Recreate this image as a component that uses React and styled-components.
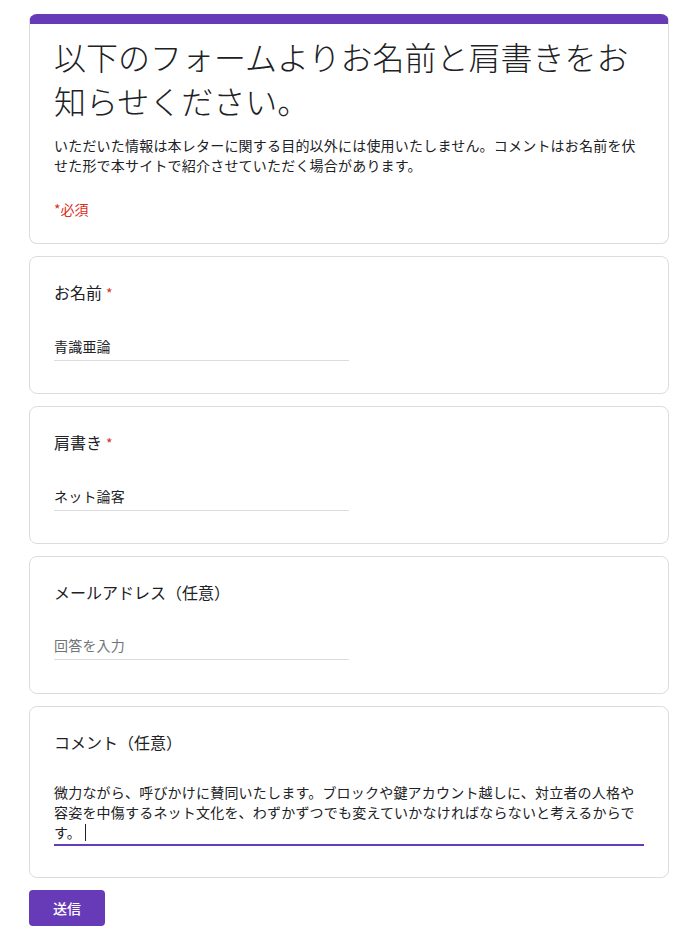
import React from "react";
import styled, { createGlobalStyle } from "styled-components";

const Global = createGlobalStyle`
  html, body { margin: 0; padding: 0; background: #fff; }
  body {
    font-family: "Noto Sans CJK JP", "Noto Sans", Roboto, Arial, sans-serif;
    color: #202124;
  }
  * { box-sizing: border-box; }
`;

const Page = styled.div`
  padding: 14px 13px 14px 29px;
  width: 682px;
  display: flex;
  flex-direction: column;
  gap: 12px;
`;

const Card = styled.div`
  background: #fff;
  border: 1px solid #dadce0;
  border-radius: 8px;
  padding: 24px 24px 24px;
  display: flex;
  flex-direction: column;
  min-height: ${(p) => p.$minHeight || 0}px;
`;

const HeaderCard = styled(Card)`
  border-top: 10px solid #673ab7;
  padding-top: 10px;
`;

const Title = styled.h1`
  margin: 0;
  font-size: 32px;
  line-height: 44px;
  font-weight: 300;
  color: #202124;
  letter-spacing: 0;
`;

const Description = styled.p`
  margin: 13px 0 0;
  font-size: 14px;
  line-height: 20px;
  letter-spacing: 0.2px;
  color: #202124;
`;

const Required = styled.div`
  margin-top: 24px;
  font-size: 14px;
  line-height: 20px;
  color: #d93025;
`;

const Label = styled.div`
  font-size: 16px;
  line-height: 22px;
  color: #202124;
`;

const Star = styled.span`
  color: #d93025;
  margin-left: 4px;
  font-size: 14px;
`;

const Field = styled.div`
  margin-top: ${(p) => (p.$multi ? 29 : 32)}px;
  margin-bottom: ${(p) => (p.$multi ? 7 : 8)}px;
  width: ${(p) => (p.$multi ? "100%" : "50%")};
  padding-bottom: ${(p) => (p.$multi ? 2 : 4)}px;
  border-bottom: ${(p) => (p.$active ? "2px solid #673ab7" : "1px solid #dadce0")};
  font-size: 14px;
  line-height: 20px;
  letter-spacing: 0.2px;
  color: ${(p) => (p.$placeholder ? "#70757a" : "#202124")};
`;

const Caret = styled.span`
  display: inline-block;
  width: 1px;
  height: 17px;
  background: #202124;
  vertical-align: -3px;
  margin-left: 4px;
`;

const SubmitRow = styled.div`
  display: flex;
`;

const SubmitButton = styled.button`
  width: 76px;
  height: 36px;
  border: none;
  border-radius: 4px;
  background: #673ab7;
  color: #fff;
  font-family: inherit;
  font-size: 14px;
  font-weight: 500;
  cursor: pointer;
`;

const questions = [
  { label: "お名前", required: true, value: "青識亜論" },
  { label: "肩書き", required: true, value: "ネット論客" },
  { label: "メールアドレス（任意）", required: false, placeholder: "回答を入力" },
];

export default function App() {
  return (
    <>
      <Global />
      <Page>
        <HeaderCard>
          <Title>以下のフォームよりお名前と肩書きをお知らせください。</Title>
          <Description>
            いただいた情報は本レターに関する目的以外には使用いたしません。コメントはお名前を伏せた形で本サイトで紹介させていただく場合があります。
          </Description>
          <Required>*必須</Required>
        </HeaderCard>
        {questions.map((q) => (
          <Card key={q.label} $minHeight={138}>
            <Label>
              {q.label}
              {q.required && <Star>*</Star>}
            </Label>
            <Field $placeholder={!q.value}>{q.value || q.placeholder}</Field>
          </Card>
        ))}
        <Card>
          <Label>コメント（任意）</Label>
          <Field $multi $active>
            微力ながら、呼びかけに賛同いたします。ブロックや鍵アカウント越しに、対立者の人格や容姿を中傷するネット文化を、わずかずつでも変えていかなければならないと考えるからです。
            <Caret />
          </Field>
        </Card>
        <SubmitRow>
          <SubmitButton>送信</SubmitButton>
        </SubmitRow>
      </Page>
    </>
  );
}
